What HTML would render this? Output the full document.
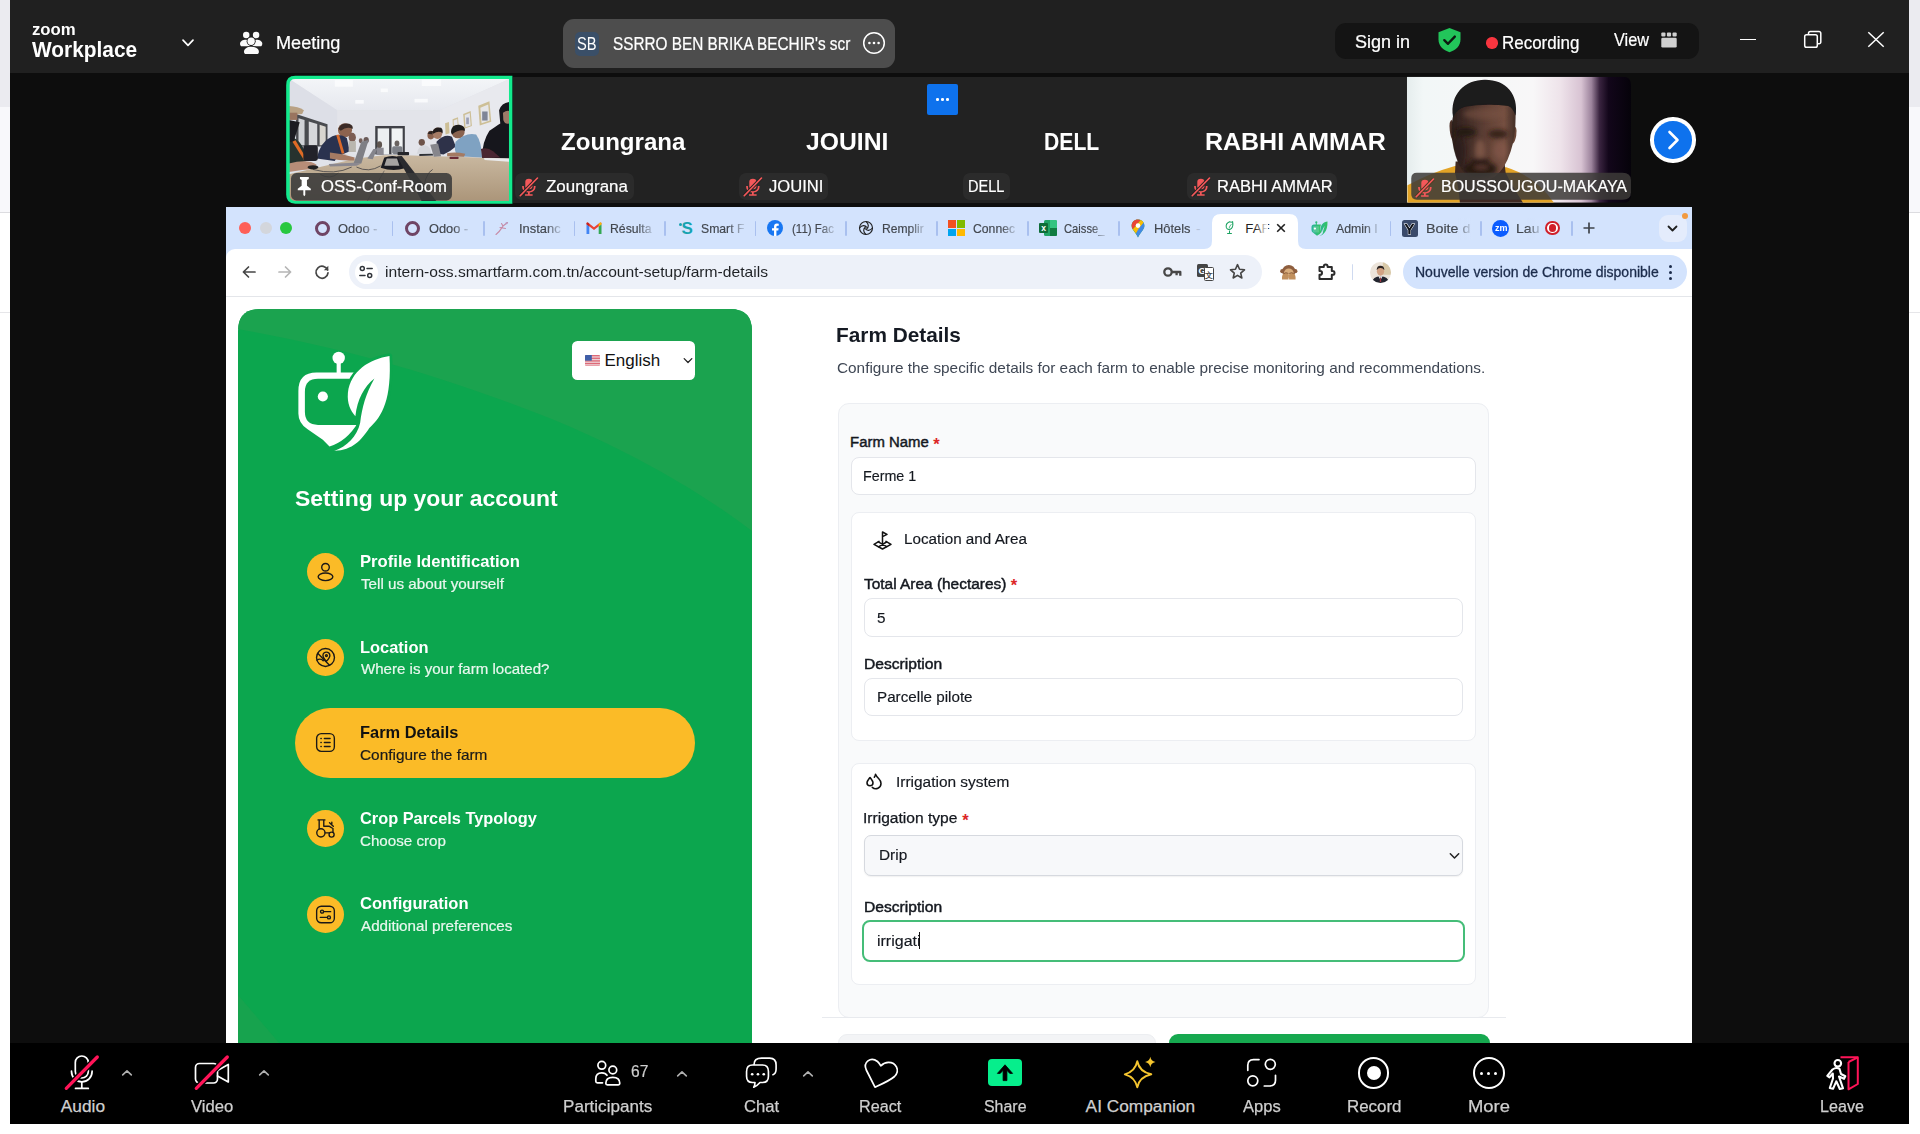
<!DOCTYPE html>
<html lang="en"><head><meta charset="utf-8"><title>Zoom Workplace - Meeting</title>
<style>
html,body{margin:0;padding:0;}
body{width:1920px;height:1134px;overflow:hidden;background:#fff;position:relative;font-family:"Liberation Sans",sans-serif;}
.b{position:absolute;box-sizing:border-box;display:block;}
.t{position:absolute;white-space:pre;line-height:1;display:block;transform-origin:0 0;}
</style></head>
<body>
<!-- top -->
<div class="b" style="left:0.00px;top:0.00px;width:1920.00px;height:107.00px;background:#ebebf0;"></div>
<div class="b" style="left:0.00px;top:107.00px;width:1920.00px;height:105.00px;background:#f8f8fb;"></div>
<div class="b" style="left:0.00px;top:212.00px;width:1920.00px;height:1.00px;background:#dcdce0;"></div>
<div class="b" style="left:0.00px;top:312.00px;width:1920.00px;height:1.00px;background:#e6e6e9;"></div>
<div class="b" style="left:10.00px;top:0.00px;width:1899.00px;height:1124.00px;background:#0d0d0d;"></div>
<div class="b" style="left:10.00px;top:0.00px;width:1899.00px;height:73.00px;background:#202020;"></div>
<span class="t" id="t1" style="left:31.83px;top:21.00px;font-size:17.00px;color:#fff;font-weight:700;transform:scaleX(0.9851);">zoom</span>
<span class="t" id="t2" style="left:32.30px;top:39.00px;font-size:22.50px;color:#fff;font-weight:700;transform:scaleX(0.9268);">Workplace</span>
<svg class="b" style="left:181.00px;top:38.20px;" width="14.00" height="10.00" viewBox="0 0 14 10"><path d="M2 2.2 L7 7.4 L12 2.2" fill="none" stroke="#fff" stroke-width="1.7" stroke-linecap="round" stroke-linejoin="round"/></svg>
<svg class="b" style="left:230.00px;top:22.00px;" width="50.00" height="40.00" viewBox="0 0 1418 1134"><g fill="#fafafa"><circle cx="460" cy="370" r="92"/><circle cx="740" cy="370" r="92"/><path d="M285 610 C285 545 360 500 450 500 C520 500 560 530 560 600 L560 690 L340 690 C300 690 285 660 285 610Z"/><path d="M915 610 C915 545 840 500 750 500 C680 500 640 530 640 600 L640 690 L860 690 C900 690 915 660 915 610Z"/><circle cx="600" cy="545" r="128" fill="#202020"/><circle cx="600" cy="545" r="104"/><path d="M372 850 C372 750 470 680 608 680 C746 680 844 750 844 850 C844 905 810 934 770 934 L446 934 C406 934 372 905 372 850Z" fill="#202020"/><path d="M396 845 C396 765 480 705 608 705 C736 705 820 765 820 845 C820 890 795 910 760 910 L456 910 C421 910 396 890 396 845Z"/></g></svg>
<span class="t" id="t3" style="left:276.17px;top:35.00px;font-size:17.50px;color:#fff;transform:scaleX(1.0337);-webkit-text-stroke:0.220px #fff;">Meeting</span>
<div class="b" style="left:563.00px;top:19.00px;width:332.00px;height:49.00px;background:#4d4d4d;border-radius:11px;"></div>
<div class="b" style="left:575.00px;top:32.00px;width:24.00px;height:23.50px;background:#3a4f68;border-radius:5px;"></div>
<span class="t" id="t4" style="left:576.80px;top:36.00px;font-size:17.50px;color:#fff;transform:scaleX(0.840);">SB</span>
<span class="t" id="t5" style="left:612.63px;top:36.00px;font-size:17.50px;color:#fff;transform:scaleX(0.8763);-webkit-text-stroke:0.220px #fff;">SSRRO BEN BRIKA BECHIR's scr</span>
<svg class="b" style="left:862.00px;top:31.00px;" width="24.00" height="24.00" viewBox="0 0 24 24"><circle cx="12" cy="12" r="10.3" fill="none" stroke="#fff" stroke-width="1.5"/><circle cx="7.4" cy="12" r="1.300" fill="#fff"/><circle cx="12" cy="12" r="1.300" fill="#fff"/><circle cx="16.600" cy="12" r="1.300" fill="#fff"/></svg>
<div class="b" style="left:1335.00px;top:23.00px;width:364.00px;height:36.00px;background:#141414;border-radius:11px;"></div>
<span class="t" id="t6" style="left:1354.56px;top:33.00px;font-size:18.20px;color:#fff;transform:scaleX(0.9903);-webkit-text-stroke:0.220px #fff;">Sign in</span>
<svg class="b" style="left:1437.00px;top:27.00px;" width="25.00" height="26.00" viewBox="0 0 25 26"><path d="M12.500 1 L23.500 5.200 V12.500 C23.500 18.700 19 23.200 12.500 25.200 C6 23.200 1.500 18.700 1.500 12.500 V5.200 Z" fill="#22c55a"/><path d="M7.300 13.200 L11 16.800 L17.800 9.600" fill="none" stroke="#0d1a10" stroke-width="2.400" stroke-linecap="round" stroke-linejoin="round"/></svg>
<div class="b" style="left:1486.30px;top:37.30px;width:11.40px;height:11.40px;background:#f8353f;border-radius:50%;"></div>
<span class="t" id="t7" style="left:1502.22px;top:34.00px;font-size:18.20px;color:#fff;transform:scaleX(0.9330);-webkit-text-stroke:0.220px #fff;">Recording</span>
<span class="t" id="t8" style="left:1614.37px;top:31.00px;font-size:18.20px;color:#fff;transform:scaleX(0.8978);-webkit-text-stroke:0.220px #fff;">View</span>
<svg class="b" style="left:1660.50px;top:31.50px;" width="16.00" height="16.00" viewBox="0 0 16 16"><g fill="#d0d0d0"><rect x="0.300" y="0.500" width="4.200" height="4" rx="1"/><rect x="5.900" y="0.500" width="4.200" height="4" rx="1"/><rect x="11.500" y="0.500" width="4.200" height="4" rx="1"/><rect x="0.300" y="5.700" width="15.400" height="9.800" rx="1.300"/></g></svg>
<div class="b" style="left:1740.00px;top:38.60px;width:16.00px;height:1.60px;background:#fff;"></div>
<svg class="b" style="left:1803.00px;top:30.00px;" width="20.00" height="19.00" viewBox="0 0 20 19"><path d="M5.500 4.500 V3.300 a1.800 1.800 0 0 1 1.800-1.800 H16 a1.800 1.800 0 0 1 1.800 1.800 V12 a1.800 1.800 0 0 1-1.800 1.800 H14.600" fill="none" stroke="#fff" stroke-width="1.500"/><rect x="1.700" y="4.700" width="12.600" height="12.600" rx="1.800" fill="none" stroke="#fff" stroke-width="1.500"/></svg>
<svg class="b" style="left:1867.00px;top:31.00px;" width="18.00" height="17.00" viewBox="0 0 18 17"><path d="M1.300 1.200 L16.700 15.800 M16.700 1.200 L1.300 15.800" stroke="#fff" stroke-width="1.500" fill="none"/></svg>
<!-- thumbs -->
<div class="b" style="left:513.00px;top:77.00px;width:894.00px;height:126.00px;background:#222222;"></div>
<svg class="b" style="left:284.00px;top:74.00px;" width="232.00" height="132.00" viewBox="0 0 1920 1092"><defs><clipPath id="cc"><path d="M93 42 H1862 V1050 H93 Q45 1050 45 1002 V90 Q45 42 93 42Z"/></clipPath><filter id="cb" x="-5%" y="-5%" width="110%" height="110%"><feGaussianBlur stdDeviation="5"/></filter><linearGradient id="ceil" x1="0" y1="0" x2="0" y2="1"><stop offset="0" stop-color="#f3f5f8"/><stop offset="1" stop-color="#e6e8ee"/></linearGradient><linearGradient id="tbl" x1="0" y1="0" x2="0" y2="1"><stop offset="0" stop-color="#c9b8a0"/><stop offset="1" stop-color="#ab9579"/></linearGradient></defs><path d="M93 15 H1890 V1073 H93 Q18 1073 18 998 V90 Q18 15 93 15Z" fill="#12ea8d"/><g clip-path="url(#cc)"><g filter="url(#cb)"><rect x="40" y="40" width="1830" height="1015" fill="#e1e3e9"/><polygon points="40,40 1870,40 1290,300 440,300" fill="url(#ceil)"/><polygon points="40,40 440,300 440,640 40,760" fill="#dddfe7"/><polygon points="1870,40 1290,300 1290,640 1870,720" fill="#e8e9ee"/><rect x="440" y="300" width="850" height="360" fill="#e3e4ea"/><rect x="420" y="50" width="150" height="55" fill="#fbfcfd" opacity="0.9"/><rect x="1140" y="45" width="160" height="55" fill="#fbfcfd" opacity="0.9"/><rect x="590" y="215" width="70" height="30" fill="#fbfcfd" opacity="0.9"/><rect x="1080" y="205" width="110" height="30" fill="#fbfcfd" opacity="0.9"/><rect x="800" y="120" width="60" height="30" fill="#fbfcfd" opacity="0.9"/><polygon points="100,330 360,415 360,600 100,600" fill="#4a4b50"/><polygon points="120,365 170,380 170,590 120,590" fill="#d0d2d6"/><polygon points="205,392 275,414 275,590 205,590" fill="#d6d7da"/><polygon points="295,420 345,436 345,590 295,590" fill="#d8d5cf"/><rect x="755" y="430" width="245" height="235" fill="#3f4146"/><rect x="775" y="450" width="95" height="215" fill="#eceff1"/><rect x="890" y="450" width="92" height="215" fill="#f1f3f4"/><polygon points="1608,262 1700,225 1715,395 1620,425" fill="#cdbf96"/><polygon points="1483,330 1545,305 1555,430 1492,452" fill="#cdbf96"/><polygon points="1395,375 1440,358 1447,455 1400,470" fill="#cdbf96"/><polygon points="1333,408 1365,397 1370,490 1337,500" fill="#cdbf96"/><polygon points="1625,280 1690,253 1702,385 1635,408" fill="#e6e6e8"/><polygon points="1496,340 1537,323 1545,425 1502,440" fill="#e3e4ea"/><polygon points="1404,385 1434,373 1439,448 1407,458" fill="#e4e4ea"/><rect x="1640" y="310" width="45" height="75" fill="#7f8597"/><rect x="1508" y="360" width="22" height="55" fill="#9b9fb5"/><polygon points="40,830 600,700 820,672 1000,672 1860,700 1870,1055 40,1055" fill="url(#tbl)"/><ellipse cx="505" cy="465" rx="58" ry="58" fill="#8d6450"/><path d="M450 455 Q470 400 540 412 Q575 425 568 455 Q520 430 470 470Z" fill="#3a2c27"/><path d="M270 700 Q300 560 400 515 Q470 490 520 530 L545 640 Q440 680 420 720 Z" fill="#2c3350"/><path d="M380 650 Q480 660 585 690 L580 715 Q470 720 380 700Z" fill="#a57a64"/><polygon points="432,505 455,500 500,655 478,660" fill="#d9692a"/><ellipse cx="565" cy="525" rx="30" ry="38" fill="#7b5d52"/><rect x="535" y="555" width="60" height="90" fill="#b9b6ae"/><ellipse cx="680" cy="548" rx="22" ry="26" fill="#6b5a58"/><ellipse cx="635" cy="552" rx="16" ry="20" fill="#75605a"/><polygon points="575,740 640,560 700,545 640,740" fill="#7f7f85"/><polygon points="370,745 575,735 640,740 600,760 380,765" fill="#8b8890"/><polygon points="690,700 740,620 770,620 735,705" fill="#85858c"/><path d="M40 520 Q130 520 190 680 L190 720 L40 760Z" fill="#26332f"/><polygon points="40,380 130,400 80,560 40,560" fill="#1e1e22"/><path d="M40 265 Q120 270 165 300 L150 330 L40 340Z" fill="#b9a284"/><rect x="40" y="320" width="70" height="60" fill="#9a7560"/><polygon points="70,560 95,548 185,700 165,712" fill="#df6a25"/><path d="M40 740 Q200 700 270 750 Q250 790 150 795 L40 810Z" fill="#b78d78"/><ellipse cx="240" cy="772" rx="45" ry="18" fill="#222"/><rect x="160" y="590" width="120" height="130" rx="20" fill="#23242a"/><ellipse cx="790" cy="585" rx="22" ry="28" fill="#5f5450"/><rect x="765" y="610" width="60" height="60" fill="#8c8b93"/><ellipse cx="935" cy="575" rx="20" ry="24" fill="#6b6460"/><rect x="895" y="598" width="85" height="65" rx="15" fill="#7d8087"/><ellipse cx="1140" cy="565" rx="26" ry="28" fill="#6d5248"/><path d="M1100 660 Q1110 590 1170 590 Q1215 600 1220 660Z" fill="#d5d7dc"/><ellipse cx="1215" cy="505" rx="28" ry="36" fill="#8a6250"/><path d="M1188 495 Q1200 462 1240 475 L1240 500Z" fill="#2a2322"/><ellipse cx="1270" cy="490" rx="40" ry="48" fill="#a67c66"/><path d="M1230 480 Q1240 432 1300 445 Q1318 460 1312 490 Q1280 465 1235 495Z" fill="#231d1d"/><path d="M1262 560 Q1330 490 1390 520 L1422 600 Q1380 640 1320 665 L1275 660Z" fill="#2d3048"/><polygon points="1210,585 1275,575 1300,680 1240,685" fill="#86868c"/><ellipse cx="1440" cy="480" rx="55" ry="52" fill="#8a6350"/><path d="M1382 480 Q1385 415 1450 420 Q1500 428 1498 470 Q1450 455 1390 500Z" fill="#1f1a1a"/><path d="M1420 560 Q1500 480 1590 500 Q1635 560 1640 690 L1440 680 Q1400 640 1420 560Z" fill="#7fa2c2"/><path d="M1350 655 Q1420 640 1500 660 L1490 685 L1350 680Z" fill="#a47a62"/><path d="M1780 300 Q1800 240 1862 232 L1862 700 L1640 690 Q1640 560 1700 470 Q1760 430 1790 410Z" fill="#17151a"/><path d="M1812 320 Q1840 300 1862 305 L1862 410 Q1830 420 1815 380Z" fill="#9c7a68"/><path d="M1630 620 Q1680 600 1730 640 L1790 690 L1640 695Z" fill="#4a2730"/><polygon points="1655,695 1862,700 1862,725 1660,712" fill="#e9eaec"/><polygon points="1120,662 1230,660 1235,675 1120,678" fill="#2f3036"/><rect x="1370" y="685" width="75" height="18" rx="6" fill="#6a2c34"/><path d="M830 690 Q900 665 960 690 L1000 780 Q900 810 800 775Z" fill="#1c1d22"/><path d="M850 700 L935 700 L955 760 L830 760Z" fill="#c9c6c2" opacity="0.800"/><polygon points="935,680 975,678 1260,1050 1140,1050" fill="#2a2a2e"/><rect x="940" y="645" width="95" height="28" rx="6" fill="#26272c"/><path d="M240 790 Q420 840 560 770 M300 830 Q380 880 450 820 M600 770 Q700 820 800 760 M1140 1050 Q1160 820 1230 790" fill="none" stroke="#33333a" stroke-width="6"/><path d="M690 1050 L830 800" fill="none" stroke="#4b4a4c" stroke-width="5"/></g></g><rect x="58" y="820" width="1332" height="226" rx="45" fill="#3a3a3a" opacity="0.880"/><path d="M132 852 H205 V868 L190 878 V925 L222 950 V962 H176 V1002 L168 1012 L160 1002 V962 H114 V950 L146 925 V878 L132 868Z" fill="#fff"/></svg>
<span class="t" id="t9" style="left:321.30px;top:179.00px;font-size:16.80px;color:#fff;transform:scaleX(0.9917);-webkit-text-stroke:0.200px #fff;">OSS-Conf-Room</span>
<span class="t" id="t10" style="left:560.79px;top:130.00px;font-size:24.00px;color:#fff;font-weight:700;transform:scaleX(1.0034);">Zoungrana</span>
<span class="t" id="t11" style="left:805.89px;top:130.00px;font-size:24.00px;color:#fff;font-weight:700;transform:scaleX(1.0290);">JOUINI</span>
<span class="t" id="t12" style="left:1044.03px;top:130.00px;font-size:24.00px;color:#fff;font-weight:700;transform:scaleX(0.8811);">DELL</span>
<span class="t" id="t13" style="left:1204.51px;top:130.00px;font-size:24.00px;color:#fff;font-weight:700;transform:scaleX(1.0409);">RABHI AMMAR</span>
<div class="b" style="left:515.00px;top:172.50px;width:119.00px;height:27.50px;background:#2b2b2b;border-radius:7px;"></div><svg class="b" style="left:518.00px;top:175.00px;" width="22.00" height="23.00" viewBox="0 0 22 23"><g transform="translate(0.6,2.3) scale(1.08,0.92)"><g fill="#f4585a"><rect x="6.200" y="1.500" width="6.600" height="11.500" rx="3.300"/><path d="M3.300 9.500h1.600v1a4.600 4.600 0 0 0 9.200 0v-1h1.600v1a6.200 6.200 0 0 1-5.400 6.150V18.500h2.700v1.500H6v-1.500h2.700v-1.850A6.200 6.200 0 0 1 3.300 10.500z"/></g><path d="M1.500 20 L17.500 0.800" stroke="#222" stroke-width="3.4"/><path d="M1.500 20 L17.500 0.800" stroke="#f4585a" stroke-width="1.500" stroke-linecap="round"/></g></svg><span class="t" id="t14" style="left:545.59px;top:179.00px;font-size:16.80px;color:#fff;transform:scaleX(1.0087);-webkit-text-stroke:0.200px #fff;">Zoungrana</span>
<div class="b" style="left:739.00px;top:172.50px;width:89.00px;height:27.50px;background:#2b2b2b;border-radius:7px;"></div><svg class="b" style="left:742.00px;top:175.00px;" width="22.00" height="23.00" viewBox="0 0 22 23"><g transform="translate(0.6,2.3) scale(1.08,0.92)"><g fill="#f4585a"><rect x="6.200" y="1.500" width="6.600" height="11.500" rx="3.300"/><path d="M3.300 9.500h1.600v1a4.600 4.600 0 0 0 9.200 0v-1h1.600v1a6.200 6.200 0 0 1-5.400 6.150V18.500h2.700v1.500H6v-1.500h2.700v-1.850A6.200 6.200 0 0 1 3.300 10.500z"/></g><path d="M1.500 20 L17.500 0.800" stroke="#222" stroke-width="3.4"/><path d="M1.500 20 L17.500 0.800" stroke="#f4585a" stroke-width="1.500" stroke-linecap="round"/></g></svg><span class="t" id="t15" style="left:769.23px;top:179.00px;font-size:16.80px;color:#fff;transform:scaleX(0.9879);-webkit-text-stroke:0.200px #fff;">JOUINI</span>
<div class="b" style="left:962.50px;top:172.50px;width:47.50px;height:27.50px;background:#2b2b2b;border-radius:7px;"></div><span class="t" id="t16" style="left:968.36px;top:179.00px;font-size:16.80px;color:#fff;transform:scaleX(0.8691);-webkit-text-stroke:0.200px #fff;">DELL</span>
<div class="b" style="left:1187.00px;top:172.50px;width:150.00px;height:27.50px;background:#2b2b2b;border-radius:7px;"></div><svg class="b" style="left:1190.00px;top:175.00px;" width="22.00" height="23.00" viewBox="0 0 22 23"><g transform="translate(0.6,2.3) scale(1.08,0.92)"><g fill="#f4585a"><rect x="6.200" y="1.500" width="6.600" height="11.500" rx="3.300"/><path d="M3.300 9.500h1.600v1a4.600 4.600 0 0 0 9.200 0v-1h1.600v1a6.200 6.200 0 0 1-5.400 6.150V18.500h2.700v1.500H6v-1.500h2.700v-1.850A6.200 6.200 0 0 1 3.300 10.500z"/></g><path d="M1.500 20 L17.500 0.800" stroke="#222" stroke-width="3.4"/><path d="M1.500 20 L17.500 0.800" stroke="#f4585a" stroke-width="1.500" stroke-linecap="round"/></g></svg><span class="t" id="t17" style="left:1216.78px;top:179.00px;font-size:16.80px;color:#fff;transform:scaleX(0.9850);-webkit-text-stroke:0.200px #fff;">RABHI AMMAR</span>
<div class="b" style="left:927.00px;top:84.00px;width:31.00px;height:31.00px;background:#0e72ed;border-radius:2px;"></div>
<div class="b" style="left:936.05px;top:98.00px;width:2.50px;height:2.50px;background:#fff;border-radius:50%;"></div>
<div class="b" style="left:941.25px;top:98.00px;width:2.50px;height:2.50px;background:#fff;border-radius:50%;"></div>
<div class="b" style="left:946.45px;top:98.00px;width:2.50px;height:2.50px;background:#fff;border-radius:50%;"></div>
<svg class="b" style="left:1400.00px;top:74.00px;" width="240.00" height="132.00" viewBox="0 0 1920 1056"><defs><clipPath id="pc"><path d="M55 22 H1785 Q1848 22 1848 85 V967 Q1848 1030 1785 1030 H55Z"/></clipPath><linearGradient id="pbg" x1="0" y1="0" x2="1" y2="0"><stop offset="0" stop-color="#e4ecec"/><stop offset="0.080" stop-color="#f2f7f7"/><stop offset="0.560" stop-color="#f8f7f8"/><stop offset="0.680" stop-color="#eee3ea"/><stop offset="0.770" stop-color="#d8c3d3"/><stop offset="0.815" stop-color="#9c839c"/><stop offset="0.850" stop-color="#3a2440"/><stop offset="0.890" stop-color="#12061a"/><stop offset="1" stop-color="#040208"/></linearGradient><linearGradient id="skin" x1="0" y1="0" x2="1" y2="0"><stop offset="0" stop-color="#2c1f1b"/><stop offset="0.300" stop-color="#47302a"/><stop offset="0.600" stop-color="#654438"/><stop offset="0.820" stop-color="#755041"/><stop offset="1" stop-color="#432e27"/></linearGradient><filter id="bl" x="-10%" y="-10%" width="120%" height="120%"><feGaussianBlur stdDeviation="6"/></filter><filter id="bl2" x="-30%" y="-30%" width="160%" height="160%"><feGaussianBlur stdDeviation="16"/></filter><clipPath id="fc"><path d="M425 330 Q430 230 500 200 L860 200 Q925 240 925 340 Q925 500 885 620 Q840 760 760 820 Q690 865 620 855 Q520 830 470 720 Q420 600 412 470 Q410 390 425 330Z"/></clipPath></defs><g clip-path="url(#pc)"><rect x="40" y="10" width="1830" height="1040" fill="url(#pbg)"/><g filter="url(#bl)"><path d="M60 1040 L60 890 Q240 790 440 735 L850 745 Q1090 820 1240 1040Z" fill="#e2a327"/><path d="M445 700 L835 700 L845 790 Q900 900 990 1040 L480 1040 Q470 900 440 790Z" fill="#3f2a22"/><path d="M415 365 Q390 370 398 450 Q405 520 430 540Z" fill="#4a3028"/><path d="M912 420 Q940 420 930 490 Q922 545 900 560Z" fill="#6a4638"/><path d="M425 330 Q430 230 500 200 L860 200 Q925 240 925 340 Q925 500 885 620 Q840 760 760 820 Q690 865 620 855 Q520 830 470 720 Q420 600 412 470 Q410 390 425 330Z" fill="url(#skin)"/><path d="M425 345 C395 160 520 45 680 45 C850 45 950 160 925 335 Q905 270 865 255 Q680 235 520 262 Q455 280 425 345Z" fill="#1d1a1b"/></g><g clip-path="url(#fc)"><g filter="url(#bl2)"><ellipse cx="525" cy="465" rx="85" ry="38" fill="#21140f" opacity="0.850"/><ellipse cx="785" cy="480" rx="80" ry="36" fill="#2a1914" opacity="0.800"/><ellipse cx="640" cy="610" rx="42" ry="85" fill="#8d6150" opacity="0.650"/><ellipse cx="800" cy="610" rx="60" ry="70" fill="#94655394" opacity="0.600"/><ellipse cx="470" cy="620" rx="50" ry="130" fill="#2a1b17" opacity="0.700"/><ellipse cx="640" cy="760" rx="135" ry="62" fill="#241612" opacity="0.900"/><ellipse cx="640" cy="690" rx="80" ry="20" fill="#2a1a15" opacity="0.800"/><ellipse cx="650" cy="745" rx="60" ry="16" fill="#6b4438" opacity="0.800"/><ellipse cx="675" cy="320" rx="170" ry="45" fill="#7a5444" opacity="0.550"/></g></g></g><path d="M135 790 H1780 Q1848 790 1848 850 V945 Q1848 1005 1780 1005 H135 Q90 1005 90 960 V835 Q90 790 135 790Z" fill="#3c3a38" opacity="0.860"/></svg>
<svg class="b" style="left:1414.00px;top:175.50px;" width="22.00" height="23.00" viewBox="0 0 22 23"><g transform="translate(0.6,2.3) scale(1.08,0.92)"><g fill="#f4585a"><rect x="6.200" y="1.500" width="6.600" height="11.500" rx="3.300"/><path d="M3.300 9.500h1.600v1a4.600 4.600 0 0 0 9.200 0v-1h1.600v1a6.200 6.200 0 0 1-5.400 6.150V18.500h2.700v1.500H6v-1.500h2.700v-1.850A6.200 6.200 0 0 1 3.300 10.500z"/></g><path d="M1.500 20 L17.500 0.800" stroke="#4a3a22" stroke-width="3.4"/><path d="M1.500 20 L17.500 0.800" stroke="#f4585a" stroke-width="1.500" stroke-linecap="round"/></g></svg>
<span class="t" id="t18" style="left:1440.93px;top:179.00px;font-size:16.80px;color:#fff;transform:scaleX(0.9531);-webkit-text-stroke:0.200px #fff;">BOUSSOUGOU-MAKAYA</span>
<div class="b" style="left:1650.30px;top:117.30px;width:45.40px;height:45.40px;background:#fff;border-radius:50%;"></div>
<div class="b" style="left:1654.20px;top:121.20px;width:37.60px;height:37.60px;background:#0e72ed;border-radius:50%;"></div>
<svg class="b" style="left:1663.00px;top:128.00px;" width="20.00" height="24.00" viewBox="0 0 20 24"><path d="M6.500 4 L14.500 12 L6.500 20" fill="none" stroke="#fff" stroke-width="2.600" stroke-linecap="round" stroke-linejoin="round"/></svg>
<!-- chrome -->
<div class="b" style="left:226.00px;top:207.00px;width:1466.00px;height:836.00px;background:#fff;"></div>
<div class="b" style="left:226.00px;top:207.00px;width:1466.00px;height:55.00px;background:#d3e3fd;"></div>
<div class="b" style="left:226.00px;top:249.00px;width:1466.00px;height:47.00px;background:#fff;border-radius:9px 0 0 0;"></div>
<div class="b" style="left:226.00px;top:296.00px;width:1466.00px;height:1.00px;background:#e4e6ea;"></div>
<div class="b" style="left:239.10px;top:221.80px;width:12.40px;height:12.40px;background:#fe5f57;border-radius:50%;"></div>
<div class="b" style="left:259.60px;top:221.80px;width:12.40px;height:12.40px;background:#d3d6dc;border-radius:50%;"></div>
<div class="b" style="left:280.10px;top:221.80px;width:12.40px;height:12.40px;background:#28c840;border-radius:50%;"></div>
<div class="b" style="left:391.70px;top:220.50px;width:1.60px;height:15.50px;background:#a9c0ef;border-radius:1px;"></div>
<div class="b" style="left:483.20px;top:220.50px;width:1.60px;height:15.50px;background:#a9c0ef;border-radius:1px;"></div>
<div class="b" style="left:573.70px;top:220.50px;width:1.60px;height:15.50px;background:#a9c0ef;border-radius:1px;"></div>
<div class="b" style="left:664.20px;top:220.50px;width:1.60px;height:15.50px;background:#a9c0ef;border-radius:1px;"></div>
<div class="b" style="left:754.70px;top:220.50px;width:1.60px;height:15.50px;background:#a9c0ef;border-radius:1px;"></div>
<div class="b" style="left:845.20px;top:220.50px;width:1.60px;height:15.50px;background:#a9c0ef;border-radius:1px;"></div>
<div class="b" style="left:936.20px;top:220.50px;width:1.60px;height:15.50px;background:#a9c0ef;border-radius:1px;"></div>
<div class="b" style="left:1027.20px;top:220.50px;width:1.60px;height:15.50px;background:#a9c0ef;border-radius:1px;"></div>
<div class="b" style="left:1118.20px;top:220.50px;width:1.60px;height:15.50px;background:#a9c0ef;border-radius:1px;"></div>
<div class="b" style="left:1389.80px;top:220.50px;width:1.60px;height:15.50px;background:#a9c0ef;border-radius:1px;"></div>
<div class="b" style="left:1480.20px;top:220.50px;width:1.60px;height:15.50px;background:#a9c0ef;border-radius:1px;"></div>
<div class="b" style="left:1571.20px;top:220.50px;width:1.60px;height:15.50px;background:#a9c0ef;border-radius:1px;"></div>
<div class="b" style="left:314.50px;top:220.50px;width:15.00px;height:15.00px;border:3.2px solid #6f4565;border-radius:50%;"></div>
<span class="t" id="t19" style="left:338.26px;top:222.00px;font-size:13.30px;color:#42474e;transform:scaleX(0.9703);-webkit-text-stroke:0.180px #42474e;">Odoo -</span>
<div class="b" style="left:362.00px;top:218.00px;width:19.00px;height:22.00px;background:linear-gradient(90deg,rgba(211,227,253,0),#d3e3fd);"></div>
<div class="b" style="left:405.00px;top:220.50px;width:15.00px;height:15.00px;border:3.2px solid #6f4565;border-radius:50%;"></div>
<span class="t" id="t20" style="left:428.88px;top:222.00px;font-size:13.30px;color:#42474e;transform:scaleX(0.9646);-webkit-text-stroke:0.180px #42474e;">Odoo -</span>
<div class="b" style="left:453.00px;top:218.00px;width:19.00px;height:22.00px;background:linear-gradient(90deg,rgba(211,227,253,0),#d3e3fd);"></div>
<svg class="b" style="left:494.00px;top:220.00px;" width="16.00" height="16.00" viewBox="0 0 16 16"><path d="M2 14.500 C5.500 12 7 9 9 6 M9 6 L13.500 2.500 M6 7.500 L11.500 8.500 M9 6 L7.500 3.500" stroke="#c47d98" stroke-width="1.150" fill="none" stroke-linecap="round" opacity="0.850"/><circle cx="12.600" cy="3.200" r="1.100" fill="#b59ac4" opacity="0.850"/></svg>
<span class="t" id="t21" style="left:518.84px;top:222.00px;font-size:13.30px;color:#42474e;transform:scaleX(0.9727);-webkit-text-stroke:0.180px #42474e;">Instanc</span>
<div class="b" style="left:546.00px;top:218.00px;width:18.00px;height:22.00px;background:linear-gradient(90deg,rgba(211,227,253,0),#d3e3fd);"></div>
<svg class="b" style="left:585.50px;top:221.50px;" width="16.00" height="13.00" viewBox="0 0 16 13"><path d="M0.500 12 V2.200 L3.300 4.400 V12Z" fill="#4285f4"/><path d="M15.500 12 V2.200 L12.700 4.400 V12Z" fill="#34a853"/><path d="M0.500 2.200 V1.500 Q0.500 0.300 1.900 0.600 L8 5.300 L14.100 0.600 Q15.500 0.300 15.500 1.500 V2.200 L8 8 Z" fill="#ea4335"/><path d="M12.700 4.400 L15.500 2.200 V1.500 Q15.500 0.300 14.100 0.600 L12.700 1.700Z" fill="#fbbc04"/><path d="M0.500 2.200 L3.300 4.400 V1.700 L1.900 0.600 Q0.500 0.300 0.500 1.500Z" fill="#c5221f"/></svg>
<span class="t" id="t22" style="left:609.98px;top:222.00px;font-size:13.30px;color:#42474e;transform:scaleX(0.9204);-webkit-text-stroke:0.180px #42474e;">Résulta</span>
<div class="b" style="left:638.00px;top:218.00px;width:18.00px;height:22.00px;background:linear-gradient(90deg,rgba(211,227,253,0),#d3e3fd);"></div>
<span class="t" id="t23" style="left:681.50px;top:220.00px;font-size:17.00px;color:#17a3b0;font-weight:700;">S</span>
<div class="b" style="left:678.80px;top:222.50px;width:3.00px;height:3.00px;background:#17a3b0;border-radius:50%;"></div>
<span class="t" id="t24" style="left:700.77px;top:222.00px;font-size:13.30px;color:#42474e;transform:scaleX(0.9175);-webkit-text-stroke:0.180px #42474e;">Smart F</span>
<div class="b" style="left:728.00px;top:218.00px;width:20.00px;height:22.00px;background:linear-gradient(90deg,rgba(211,227,253,0),#d3e3fd);"></div>
<div class="b" style="left:766.70px;top:219.70px;width:16.60px;height:16.60px;background:#1877f2;border-radius:50%;"></div>
<svg class="b" style="left:766.70px;top:219.70px;" width="16.60" height="16.60" viewBox="0 0 16.600 16.600"><path d="M9.400 16.600 V10.600 H11.300 L11.650 8.300 H9.400 V6.900 Q9.400 5.750 10.600 5.750 H11.750 V3.750 Q10.800 3.600 9.900 3.600 Q7.050 3.600 7.050 6.550 V8.300 H5 V10.600 H7.050 V16.600Z" fill="#fff"/></svg>
<span class="t" id="t25" style="left:792.22px;top:222.00px;font-size:13.30px;color:#42474e;transform:scaleX(0.8661);-webkit-text-stroke:0.180px #42474e;">(11) Fac</span>
<div class="b" style="left:820.00px;top:218.00px;width:18.00px;height:22.00px;background:linear-gradient(90deg,rgba(211,227,253,0),#d3e3fd);"></div>
<svg class="b" style="left:858.00px;top:220.00px;" width="16.00" height="16.00" viewBox="0 0 16 16"><g fill="none" stroke="#202123" stroke-width="1.150"><circle cx="8" cy="8" r="6.500"/><path d="M8 1.500 C11 4 11 7 8.500 9 M14.500 8 C12 11 9 11 7 8.500 M8 14.500 C5 12 5 9 7.500 7 M1.500 8 C4 5 7 5 9 7.500"/></g></svg>
<span class="t" id="t26" style="left:881.99px;top:222.00px;font-size:13.30px;color:#42474e;transform:scaleX(0.9099);-webkit-text-stroke:0.180px #42474e;">Remplir</span>
<div class="b" style="left:910.00px;top:218.00px;width:18.00px;height:22.00px;background:linear-gradient(90deg,rgba(211,227,253,0),#d3e3fd);"></div>
<div class="b" style="left:948.20px;top:219.80px;width:7.80px;height:7.80px;background:#f25022;"></div>
<div class="b" style="left:957.00px;top:219.80px;width:7.80px;height:7.80px;background:#7fba00;"></div>
<div class="b" style="left:948.20px;top:228.60px;width:7.80px;height:7.80px;background:#00a4ef;"></div>
<div class="b" style="left:957.00px;top:228.60px;width:7.80px;height:7.80px;background:#ffb900;"></div>
<span class="t" id="t27" style="left:973.19px;top:222.00px;font-size:13.30px;color:#42474e;transform:scaleX(0.9176);-webkit-text-stroke:0.180px #42474e;">Connec</span>
<div class="b" style="left:1001.00px;top:218.00px;width:18.00px;height:22.00px;background:linear-gradient(90deg,rgba(211,227,253,0),#d3e3fd);"></div>
<div class="b" style="left:1043.50px;top:220.00px;width:13.00px;height:16.00px;background:#21a366;border-radius:1.500px;"></div>
<div class="b" style="left:1050.00px;top:220.00px;width:6.50px;height:8.00px;background:#33c481;border-radius:0 1.500px 0 0;"></div>
<div class="b" style="left:1050.00px;top:228.00px;width:6.50px;height:8.00px;background:#107c41;border-radius:0 0 1.500px 0;"></div>
<div class="b" style="left:1038.80px;top:223.30px;width:9.50px;height:9.50px;background:#0e6d38;border-radius:1px;"></div>
<span class="t" id="t28" style="left:1041.20px;top:224.00px;font-size:8.50px;color:#fff;font-weight:700;">x</span>
<span class="t" id="t29" style="left:1063.88px;top:222.00px;font-size:13.30px;color:#42474e;transform:scaleX(0.8440);-webkit-text-stroke:0.180px #42474e;">Caisse_</span>
<div class="b" style="left:1091.00px;top:218.00px;width:18.00px;height:22.00px;background:linear-gradient(90deg,rgba(211,227,253,0),#d3e3fd);"></div>
<svg class="b" style="left:1131.00px;top:219.00px;" width="14.00" height="19.00" viewBox="0 0 14 19"><path d="M7 0.500 C3.300 0.500 0.600 3.200 0.600 6.700 C0.600 10.700 5 13.500 7 18.500 C9 13.500 13.400 10.700 13.400 6.700 C13.400 3.200 10.700 0.500 7 0.500Z" fill="#34a853"/><path d="M7 0.500 C3.300 0.500 0.600 3.200 0.600 6.700 C0.600 8 1.100 9.200 1.800 10.300 L9.700 1.100 C8.900 0.700 8 0.500 7 0.500Z" fill="#ea4335"/><path d="M9.700 1.100 L4.300 7.400 L1.800 10.300 C2.700 11.700 3.900 13 5 14.500 L12.600 3.700 C11.900 2.500 10.900 1.600 9.700 1.100Z" fill="#fbbc04"/><path d="M12.600 3.700 L7.300 10 L5 14.500 C5.800 15.700 6.500 17 7 18.500 C9 13.500 13.400 10.700 13.400 6.700 C13.400 5.600 13.100 4.600 12.600 3.700Z" fill="#4285f4" opacity="0.900"/><circle cx="7" cy="6.600" r="2.300" fill="#fff"/></svg>
<span class="t" id="t30" style="left:1154.12px;top:222.00px;font-size:13.30px;color:#42474e;transform:scaleX(0.9696);-webkit-text-stroke:0.180px #42474e;">Hôtels</span>
<span class="t" id="t31" style="left:1196.00px;top:222.00px;font-size:13.30px;color:#b5c2da;">-</span>
<svg class="b" style="left:1204.00px;top:214.00px;" width="102.00" height="35.00" viewBox="0 0 102 35"><path d="M0 35 Q8 35 8 27 V9 Q8 0 17 0 H85 Q94 0 94 9 V27 Q94 35 102 35Z" fill="#fff"/></svg>
<svg class="b" style="left:1223.50px;top:221.00px;" width="11.00" height="13.40" viewBox="0 0 14 17"><path d="M7 1 C3.500 2.500 2.200 5.500 3 8.500 C4 11.500 7.500 11.500 9.500 9.500 C11.500 7 11.500 3.500 11 1 C9.500 1.800 8.200 1.500 7 1Z" fill="none" stroke="#1aa260" stroke-width="1.300"/><path d="M7 12 V15.500 M4 15.800 H10" stroke="#1aa260" stroke-width="1.300" fill="none"/><path d="M6.500 9.500 C7 7 8 5.500 9.500 4" stroke="#1aa260" stroke-width="1" fill="none"/></svg>
<span class="t" id="t32" style="left:1245.30px;top:222.00px;font-size:13.30px;color:#1f1f1f;">FAF</span>
<div class="b" style="left:1255.00px;top:219.00px;width:13.00px;height:20.00px;background:linear-gradient(90deg,rgba(255,255,255,0),#fff);"></div>
<svg class="b" style="left:1275.50px;top:223.00px;" width="10.00" height="10.00" viewBox="0 0 10 10"><path d="M1.200 1.200 L8.800 8.800 M8.800 1.200 L1.200 8.800" stroke="#1f1f1f" stroke-width="1.600" fill="none"/></svg>
<svg class="b" style="left:1311.00px;top:220.50px;" width="17.00" height="15.00" viewBox="0 0 17 15"><defs><linearGradient id="adg" x1="0" y1="0" x2="1" y2="0"><stop offset="0" stop-color="#27b39a"/><stop offset="1" stop-color="#35c45f"/></linearGradient></defs><g fill="url(#adg)"><circle cx="5.300" cy="1.300" r="1.100"/><rect x="4.800" y="1.500" width="1" height="2.500"/><path d="M3 3.600 H10 Q8.500 8 10.500 11 Q8.500 14 6 14.700 L1.800 11.600 Q0.500 10.600 0.500 9 V6.100 Q0.500 3.600 3 3.600Z"/><path d="M16.500 0.500 C12.500 1 9.300 4 9.800 8.500 C10 10 10.800 11 11 11.300 C11.300 8.800 12.300 6.500 14 5 C12.600 7.500 12.200 10 11.800 12 C11.300 13.300 10 14.300 8.300 14.800 C12 14.700 16.800 10.500 16.500 0.500Z"/></g><circle cx="3.900" cy="7.600" r="1.150" fill="#fff"/><path d="M2.300 5.200 H8.200 V11.400 H2.800 Q1.800 11.400 1.800 10.400 V5.700Z" fill="#fff" opacity="0.180"/></svg>
<span class="t" id="t33" style="left:1336.31px;top:222.00px;font-size:13.30px;color:#42474e;transform:scaleX(0.9271);-webkit-text-stroke:0.180px #42474e;">Admin I</span>
<div class="b" style="left:1364.00px;top:218.00px;width:18.00px;height:22.00px;background:linear-gradient(90deg,rgba(211,227,253,0),#d3e3fd);"></div>
<div class="b" style="left:1401.50px;top:219.50px;width:16.50px;height:17.00px;background:#3a4a6b;border-radius:2.500px;"></div>
<span class="t" id="t34" style="left:1404.30px;top:221.00px;font-size:15.50px;color:#10131a;font-weight:700;-webkit-text-stroke:0.900px #fff;paint-order:stroke fill;">Y</span>
<span class="t" id="t35" style="left:1425.54px;top:222.00px;font-size:13.30px;color:#42474e;transform:scaleX(1.0730);-webkit-text-stroke:0.180px #42474e;">Boite d</span>
<div class="b" style="left:1455.00px;top:218.00px;width:18.00px;height:22.00px;background:linear-gradient(90deg,rgba(211,227,253,0),#d3e3fd);"></div>
<div class="b" style="left:1492.10px;top:219.50px;width:17.00px;height:17.00px;background:#0b5cff;border-radius:50%;"></div>
<span class="t" id="t36" style="left:1495.00px;top:224.00px;font-size:9.00px;color:#fff;font-weight:700;">zm</span>
<span class="t" id="t37" style="left:1516.38px;top:222.00px;font-size:13.30px;color:#42474e;transform:scaleX(1.0581);-webkit-text-stroke:0.180px #42474e;">Lau</span>
<div class="b" style="left:1527.00px;top:218.00px;width:16.00px;height:22.00px;background:linear-gradient(90deg,rgba(211,227,253,0),#d3e3fd);"></div>
<div class="b" style="left:1545.30px;top:220.80px;width:14.40px;height:14.40px;background:#fff;border:2px solid #d0202a;border-radius:50%;"></div>
<div class="b" style="left:1548.80px;top:224.30px;width:7.40px;height:7.40px;background:#d0202a;border-radius:50%;"></div>
<svg class="b" style="left:1583.00px;top:221.50px;" width="12.00" height="12.00" viewBox="0 0 12 12"><path d="M6 0.500 V11.500 M0.500 6 H11.500" stroke="#3f444b" stroke-width="1.700"/></svg>
<div class="b" style="left:1659.00px;top:215.00px;width:28.00px;height:26.50px;background:#e4ecfc;border-radius:9px;"></div>
<svg class="b" style="left:1667.00px;top:224.50px;" width="11.00" height="8.00" viewBox="0 0 11 8"><path d="M1.500 1.500 L5.500 5.500 L9.500 1.500" fill="none" stroke="#1f1f1f" stroke-width="1.800" stroke-linecap="round" stroke-linejoin="round"/></svg>
<div class="b" style="left:1682.00px;top:212.50px;width:6.00px;height:6.00px;background:#f29a3f;border-radius:50%;"></div>
<svg class="b" style="left:240.00px;top:263.00px;" width="18.00" height="18.00" viewBox="0 0 18 18"><path d="M15 9 H3.600 M8.500 4 L3.400 9 L8.500 14" fill="none" stroke="#454545" stroke-width="1.700" stroke-linecap="round" stroke-linejoin="round"/></svg>
<svg class="b" style="left:276.00px;top:263.00px;" width="18.00" height="18.00" viewBox="0 0 18 18"><path d="M3 9 H14.400 M9.500 4 L14.600 9 L9.500 14" fill="none" stroke="#b5b5b5" stroke-width="1.700" stroke-linecap="round" stroke-linejoin="round"/></svg>
<svg class="b" style="left:313.00px;top:263.00px;" width="18.00" height="18.00" viewBox="0 0 18 18"><path d="M14.600 7 A6 6 0 1 0 15 9.800" fill="none" stroke="#454545" stroke-width="1.700" stroke-linecap="round"/><path d="M15.300 2.800 V7.300 H10.800Z" fill="#454545"/></svg>
<div class="b" style="left:349.00px;top:255.00px;width:913.00px;height:34.00px;background:#edf1f9;border-radius:17px;"></div>
<div class="b" style="left:354.50px;top:260.50px;width:23.00px;height:23.00px;background:#fff;border-radius:50%;"></div>
<svg class="b" style="left:358.00px;top:264.00px;" width="16.00" height="16.00" viewBox="0 0 16 16"><g fill="none" stroke="#30343a" stroke-width="1.500" stroke-linecap="round"><circle cx="4.300" cy="4.600" r="2"/><path d="M9 4.600 H14.200"/><circle cx="11.700" cy="11.400" r="2"/><path d="M1.800 11.400 H7"/></g></svg>
<span class="t" id="t38" style="left:385.40px;top:265.00px;font-size:14.60px;color:#1f2226;transform:scaleX(1.0707);">intern-oss.smartfarm.com.tn/account-setup/farm-details</span>
<svg class="b" style="left:1163.00px;top:265.50px;" width="19.00" height="12.00" viewBox="0 0 19 12"><circle cx="5" cy="6" r="3.700" fill="none" stroke="#474747" stroke-width="2.300"/><path d="M8.800 6 H17.300 V9.800 M13.600 6.500 V9.200" fill="none" stroke="#474747" stroke-width="2.300" stroke-linejoin="round"/></svg>
<div class="b" style="left:1196.90px;top:263.80px;width:11.60px;height:13.20px;background:#454545;border-radius:1.500px;"></div>
<span class="t" id="t39" style="left:1198.60px;top:266.00px;font-size:9.50px;color:#fff;font-weight:700;">G</span>
<div class="b" style="left:1203.80px;top:266.70px;width:10.00px;height:14.10px;background:#fff;border:1.300px solid #454545;border-radius:1.500px;"></div>
<span class="t" id="t40" style="left:1205.20px;top:272.00px;font-size:7.50px;color:#454545;font-weight:700;font-family:"Liberation Sans","Noto Sans CJK SC",sans-serif;">文</span>
<svg class="b" style="left:1229.20px;top:263.00px;" width="17.00" height="17.00" viewBox="0 0 20 20"><path d="M10 2 L12.400 7.400 L18.200 8 L13.800 11.900 L15.100 17.600 L10 14.600 L4.900 17.600 L6.200 11.900 L1.800 8 L7.600 7.400Z" fill="none" stroke="#454545" stroke-width="1.900" stroke-linejoin="round"/></svg>
<svg class="b" style="left:1280.30px;top:264.00px;" width="17.60" height="16.00" viewBox="0 0 22 20"><ellipse cx="11" cy="9" rx="8.200" ry="7.800" fill="#8e5e3e"/><circle cx="2.800" cy="9" r="2.600" fill="#8e5e3e"/><circle cx="19.200" cy="9" r="2.600" fill="#8e5e3e"/><ellipse cx="11" cy="11" rx="6" ry="5.500" fill="#d9ad7c"/><path d="M2.500 19.500 Q2 12 6.500 11 Q9.800 10.800 10.700 14 L10.700 19.500Z" fill="#c1905e"/><path d="M19.500 19.500 Q20 12 15.500 11 Q12.200 10.800 11.300 14 L11.300 19.500Z" fill="#c1905e"/><path d="M5 12 Q7 9.800 10.500 11.800 M17 12 Q15 9.800 11.500 11.800" stroke="#7a4e30" stroke-width="1" fill="none"/></svg>
<svg class="b" style="left:1316.50px;top:262.00px;" width="19.00" height="19.00" viewBox="0 0 19 19"><path d="M2.500 5 H6.800 V4.300 A1.900 1.900 0 0 1 10.600 4.300 V5 H14.800 V9 H15.600 A1.900 1.900 0 0 1 15.600 12.800 H14.800 V17 H2.500 V12.700 H3.200 A1.800 1.800 0 0 0 3.200 9.100 H2.500Z" fill="none" stroke="#2c2c2c" stroke-width="2" stroke-linejoin="round"/></svg>
<div class="b" style="left:1351.80px;top:264.00px;width:1.40px;height:16.00px;background:#cfdaf0;border-radius:1px;"></div>
<svg class="b" style="left:1369.50px;top:261.50px;" width="21.00" height="21.00" viewBox="0 0 23 23"><defs><clipPath id="av"><circle cx="11.500" cy="11.500" r="11.500"/></clipPath></defs><g clip-path="url(#av)"><rect width="23" height="23" fill="#ece4da"/><rect x="14" width="9" height="14" fill="#d9c9a8"/><path d="M2 23 Q3 15.500 11.500 15.500 Q20 15.500 21 23Z" fill="#22252f"/><path d="M9.300 15.500 L11.500 20 L13.700 15.500Z" fill="#f5f5f5"/><path d="M11 17 L12 17 L12.300 22 L10.700 22Z" fill="#9a3540"/><ellipse cx="11.500" cy="10" rx="4" ry="5" fill="#d2a283"/><path d="M7.300 9 Q7.500 4 11.500 4.200 Q15.700 4.200 15.700 9 Q14 6.500 11.500 6.700 Q9 6.500 7.300 9Z" fill="#2b2320"/></g></svg>
<div class="b" style="left:1402.50px;top:254.80px;width:284.50px;height:34.20px;background:#d3e3fd;border-radius:17px;"></div>
<span class="t" id="t41" style="left:1415.01px;top:266.00px;font-size:13.80px;color:#1b2b4b;transform:scaleX(1.0154);-webkit-text-stroke:0.300px #1b2b4b;">Nouvelle version de Chrome disponible</span>
<div class="b" style="left:1669.00px;top:264.70px;width:3.00px;height:3.00px;background:#1b2b4b;border-radius:50%;"></div>
<div class="b" style="left:1669.00px;top:270.70px;width:3.00px;height:3.00px;background:#1b2b4b;border-radius:50%;"></div>
<div class="b" style="left:1669.00px;top:276.70px;width:3.00px;height:3.00px;background:#1b2b4b;border-radius:50%;"></div>
<!-- page -->
<svg class="b" style="left:238.00px;top:308.70px;" width="514.00" height="735.00" viewBox="0 0 514 735"><defs><clipPath id="gp"><path d="M22 0 H492 Q514 0 514 22 V735 H0 V22 Q0 0 22 0Z"/></clipPath></defs><g clip-path="url(#gp)"><rect width="514" height="735" fill="#0ca64e"/><path d="M0 20 C100 38 200 64 321 113 C400 146 470 188 514 222 V0 H0Z" fill="#1ba34f"/><path d="M0 686 L42 735 H0Z" fill="#17a34e"/></g></svg>
<svg class="b" style="left:226.00px;top:296.00px;" width="300.00" height="180.00" viewBox="0 0 1890 1134"><g fill="#fff"><circle cx="710" cy="390" r="39"/><rect x="697" y="415" width="26" height="80"/><path d="M570 482 H830 V800 Q760 915 652 948 Q630 925 610 905 L512 838 Q456 800 456 740 V598 Q456 482 570 482Z"/></g><path d="M580 522 H860 V812 H580 Q497 812 497 730 V604 Q497 522 580 522Z" fill="#0ca64e"/><circle cx="610" cy="633" r="32" fill="#fff"/><path d="M1030 378 C905 398 785 470 768 610 C762 680 785 722 815 757 C828 652 868 572 935 520 C880 618 858 700 845 800 C825 885 760 950 682 976 C800 972 855 905 903 832 C985 758 1045 650 1030 378Z" fill="#fff" stroke="#0ca64e" stroke-width="34" paint-order="stroke" stroke-linejoin="round"/></svg>
<div class="b" style="left:571.50px;top:341.00px;width:123.50px;height:38.80px;background:#fff;border-radius:5.500px;"></div>
<svg class="b" style="left:584.50px;top:355.00px;border-radius:1px;" width="15.00" height="10.50" viewBox="0 0 15 10.500"><rect width="15" height="10.500" fill="#f2f2f2"/><rect y="0.00" width="15" height="0.810" fill="#d9485a"/><rect y="1.61" width="15" height="0.810" fill="#d9485a"/><rect y="3.23" width="15" height="0.810" fill="#d9485a"/><rect y="4.84" width="15" height="0.810" fill="#d9485a"/><rect y="6.46" width="15" height="0.810" fill="#d9485a"/><rect y="8.07" width="15" height="0.810" fill="#d9485a"/><rect y="9.69" width="15" height="0.810" fill="#d9485a"/><rect width="6.800" height="5.650" fill="#3f5fa8"/></svg>
<span class="t" id="t42" style="left:604.43px;top:352.00px;font-size:17.00px;color:#111;">English</span>
<svg class="b" style="left:682.50px;top:357.00px;" width="10.00" height="7.30" viewBox="0 0 11 8"><path d="M1.300 1.800 L5.500 6 L9.700 1.800" fill="none" stroke="#222" stroke-width="1.400" stroke-linecap="round" stroke-linejoin="round"/></svg>
<span class="t" id="t43" style="left:295.27px;top:487.00px;font-size:22.80px;color:#fff;font-weight:700;transform:scaleX(1.0065);">Setting up your account</span>
<div class="b" style="left:307.00px;top:553.20px;width:37.00px;height:37.00px;background:#fbbb27;border-radius:50%;"></div><svg class="b" style="left:314.00px;top:560.20px;" width="23.00" height="23.00" viewBox="0 0 20 20"><g fill="none" stroke="#1c1917" stroke-width="1.200" stroke-linecap="round" stroke-linejoin="round"><circle cx="10" cy="6.300" r="3.300"/><ellipse cx="10" cy="14.600" rx="6.400" ry="3.300"/></g></svg><span class="t" id="t44" style="left:360.08px;top:554.00px;font-size:15.70px;color:#fff;font-weight:700;transform:scaleX(1.0604);">Profile Identification</span><span class="t" id="t45" style="left:361.01px;top:577.00px;font-size:14.40px;color:#e9f7ee;transform:scaleX(1.0573);-webkit-text-stroke:0.200px #e9f7ee;">Tell us about yourself</span>
<div class="b" style="left:307.00px;top:638.80px;width:37.00px;height:37.00px;background:#fbbb27;border-radius:50%;"></div><svg class="b" style="left:314.00px;top:645.80px;" width="23.00" height="23.00" viewBox="0 0 20 20"><g fill="none" stroke="#1c1917" stroke-width="1.200" stroke-linecap="round" stroke-linejoin="round"><circle cx="10" cy="10" r="7.800"/><path d="M10.800 13.200 C8.500 11 7.800 9.500 7.800 8.300 A3 3 0 0 1 13.800 8.300 C13.800 9.500 13.100 11 10.800 13.200Z"/><circle cx="10.800" cy="8.300" r="0.800"/><path d="M3.200 6.300 L13.500 16.800 M2.600 12.300 C4.500 11 6.500 11.300 8 12.800"/></g></svg><span class="t" id="t46" style="left:360.08px;top:640.00px;font-size:15.70px;color:#fff;font-weight:700;transform:scaleX(1.0479);">Location</span><span class="t" id="t47" style="left:361.11px;top:662.00px;font-size:14.40px;color:#e9f7ee;transform:scaleX(1.0472);-webkit-text-stroke:0.200px #e9f7ee;">Where is your farm located?</span>
<div class="b" style="left:295.00px;top:708.10px;width:399.50px;height:69.60px;background:#fbbb27;border-radius:35px;"></div><svg class="b" style="left:314.00px;top:731.30px;" width="23.00" height="23.00" viewBox="0 0 20 20"><g fill="none" stroke="#1c1917" stroke-width="1.200" stroke-linecap="round" stroke-linejoin="round"><rect x="2.300" y="2.300" width="15.400" height="15.400" rx="4"/><path d="M9 6.500 H14 M9 10 H14 M9 13.500 H14 M6 6.500 H6.300 M6 10 H6.300 M6 13.500 H6.300"/></g></svg><span class="t" id="t48" style="left:359.76px;top:725.00px;font-size:15.70px;color:#111;font-weight:700;transform:scaleX(1.0455);">Farm Details</span><span class="t" id="t49" style="left:360.07px;top:748.00px;font-size:14.40px;color:#1a1a1a;transform:scaleX(1.0689);-webkit-text-stroke:0.200px #1a1a1a;">Configure the farm</span>
<div class="b" style="left:307.00px;top:810.00px;width:37.00px;height:37.00px;background:#fbbb27;border-radius:50%;"></div><svg class="b" style="left:314.00px;top:817.00px;" width="23.00" height="23.00" viewBox="0 0 20 20"><g fill="none" stroke="#1c1917" stroke-width="1.200" stroke-linecap="round" stroke-linejoin="round"><circle cx="6" cy="13.800" r="3.600"/><circle cx="15.300" cy="15.300" r="2.200"/><path d="M3.500 2.500 H9.500 M4.500 2.500 V10.300 M8.500 2.500 V8 H13 L16.500 10 V13 M9.600 13.800 H13 M13.500 5 L16.800 8 M15.500 4.500 V7"/></g></svg><span class="t" id="t50" style="left:360.34px;top:811.00px;font-size:15.70px;color:#fff;font-weight:700;transform:scaleX(1.0427);">Crop Parcels Typology</span><span class="t" id="t51" style="left:360.30px;top:834.00px;font-size:14.40px;color:#e9f7ee;transform:scaleX(1.0529);-webkit-text-stroke:0.200px #e9f7ee;">Choose crop</span>
<div class="b" style="left:307.00px;top:895.60px;width:37.00px;height:37.00px;background:#fbbb27;border-radius:50%;"></div><svg class="b" style="left:314.00px;top:902.60px;" width="23.00" height="23.00" viewBox="0 0 20 20"><g fill="none" stroke="#1c1917" stroke-width="1.200" stroke-linecap="round" stroke-linejoin="round"><rect x="2.300" y="2.800" width="15.400" height="14.400" rx="4"/><circle cx="7" cy="7.500" r="1.300"/><path d="M8.500 7.500 H14.500"/><circle cx="13" cy="12.500" r="1.300"/><path d="M5.500 12.500 H11.500"/></g></svg><span class="t" id="t52" style="left:360.33px;top:896.00px;font-size:15.70px;color:#fff;font-weight:700;transform:scaleX(1.0559);">Configuration</span><span class="t" id="t53" style="left:361.09px;top:919.00px;font-size:14.40px;color:#e9f7ee;transform:scaleX(1.0570);-webkit-text-stroke:0.200px #e9f7ee;">Additional preferences</span>
<span class="t" id="t54" style="left:836.49px;top:324.00px;font-size:21.00px;color:#151a23;font-weight:700;transform:scaleX(0.9908);">Farm Details</span>
<span class="t" id="t55" style="left:837.15px;top:361.00px;font-size:14.80px;color:#3f4754;transform:scaleX(1.0370);">Configure the specific details for each farm to enable precise monitoring and recommendations.</span>
<div class="b" style="left:837.50px;top:403.00px;width:651.50px;height:615.00px;background:#f9fafb;border:1.300px solid #eceef2;border-radius:11px;"></div>
<div class="b" style="left:821.80px;top:1017.00px;width:684.00px;height:1.30px;background:#e8eaee;"></div>
<span class="t" id="t56" style="left:850.11px;top:435.00px;font-size:14.90px;color:#14181f;-webkit-text-stroke:0.450px #14181f;">Farm Name</span>
<span class="t" id="t57" style="left:933.30px;top:436.00px;font-size:16.50px;color:#dc2626;font-weight:700;">*</span>
<div class="b" style="left:850.60px;top:456.80px;width:625.40px;height:38.40px;background:#fff;border:1.300px solid #e4e6eb;border-radius:8px;"></div>
<span class="t" id="t58" style="left:863.37px;top:469.00px;font-size:14.90px;color:#14181f;transform:scaleX(0.9603);-webkit-text-stroke:0.150px #14181f;">Ferme 1</span>
<div class="b" style="left:850.60px;top:511.60px;width:625.40px;height:229.20px;background:#fff;border:1.300px solid #eceef2;border-radius:8px;"></div>
<svg class="b" style="left:871.50px;top:529.50px;" width="21.00" height="21.00" viewBox="0 0 21 21"><g fill="none" stroke="#111" stroke-width="1.500" stroke-linecap="round" stroke-linejoin="round"><path d="M10.500 13.500 V2 L15 4.300 L10.500 6.700"/><path d="M7 11.300 L2 14.300 L10.500 19 L19 14.300 L14 11.300"/><path d="M6.500 16.800 L14.500 12 M6.300 11.800 L14.700 16.600"/></g></svg>
<span class="t" id="t59" style="left:903.72px;top:532.00px;font-size:14.90px;color:#14181f;transform:scaleX(1.0236);-webkit-text-stroke:0.150px #14181f;">Location and Area</span>
<span class="t" id="t60" style="left:864.35px;top:577.00px;font-size:14.90px;color:#14181f;transform:scaleX(1.0362);-webkit-text-stroke:0.450px #14181f;">Total Area (hectares)</span>
<span class="t" id="t61" style="left:1010.80px;top:577.00px;font-size:16.50px;color:#dc2626;font-weight:700;">*</span>
<div class="b" style="left:864.20px;top:598.40px;width:598.80px;height:38.40px;background:#fff;border:1.300px solid #e4e6eb;border-radius:8px;"></div>
<span class="t" id="t62" style="left:876.94px;top:611.00px;font-size:14.90px;color:#14181f;transform:scaleX(1.0272);-webkit-text-stroke:0.150px #14181f;">5</span>
<span class="t" id="t63" style="left:863.56px;top:657.00px;font-size:14.90px;color:#14181f;transform:scaleX(1.0500);-webkit-text-stroke:0.450px #14181f;">Description</span>
<div class="b" style="left:864.20px;top:678.40px;width:598.80px;height:37.60px;background:#fff;border:1.300px solid #e4e6eb;border-radius:8px;"></div>
<span class="t" id="t64" style="left:876.51px;top:690.00px;font-size:14.90px;color:#14181f;transform:scaleX(1.0218);-webkit-text-stroke:0.150px #14181f;">Parcelle pilote</span>
<div class="b" style="left:850.60px;top:762.80px;width:625.40px;height:221.80px;background:#fff;border:1.300px solid #eceef2;border-radius:8px;"></div>
<svg class="b" style="left:863.50px;top:771.50px;" width="20.00" height="20.00" viewBox="0 0 20 20"><g fill="none" stroke="#111" stroke-width="1.550" stroke-linecap="round" stroke-linejoin="round"><path d="M6 5.500 C4.300 7.800 3 9 3 10.800 A3 3 0 0 0 9 10.800 C9 9 7.700 7.800 6 5.500Z"/><path d="M10.300 5.200 C10.900 4.400 11.300 3.500 11.500 2.300 C12.300 4.300 13.500 5.500 14.800 6.800 C16.200 8.200 17 9.800 17 11.500 A5.200 5.200 0 0 1 8.300 15.400"/></g></svg>
<span class="t" id="t65" style="left:895.75px;top:775.00px;font-size:14.90px;color:#14181f;transform:scaleX(1.0371);-webkit-text-stroke:0.150px #14181f;">Irrigation system</span>
<span class="t" id="t66" style="left:863.25px;top:811.00px;font-size:14.90px;color:#14181f;transform:scaleX(1.0470);-webkit-text-stroke:0.250px #14181f;">Irrigation type</span>
<span class="t" id="t67" style="left:962.30px;top:812.00px;font-size:16.50px;color:#dc2626;font-weight:700;">*</span>
<div class="b" style="left:864.20px;top:835.20px;width:598.80px;height:40.60px;background:#f7f8fa;border:1.300px solid #d6d9df;border-radius:7px;box-shadow:0 1px 1.500px rgba(0,0,0,0.060);"></div>
<span class="t" id="t68" style="left:878.87px;top:848.00px;font-size:14.90px;color:#14181f;transform:scaleX(1.0324);-webkit-text-stroke:0.150px #14181f;">Drip</span>
<svg class="b" style="left:1448.50px;top:851.50px;" width="11.00" height="8.00" viewBox="0 0 11 8"><path d="M1.300 1.800 L5.500 6 L9.700 1.800" fill="none" stroke="#222" stroke-width="1.500" stroke-linecap="round" stroke-linejoin="round"/></svg>
<span class="t" id="t69" style="left:863.56px;top:900.00px;font-size:14.90px;color:#14181f;transform:scaleX(1.0500);-webkit-text-stroke:0.450px #14181f;">Description</span>
<div class="b" style="left:862.30px;top:919.90px;width:602.50px;height:42.10px;background:#fff;border:2.400px solid #45bd78;border-radius:8px;"></div>
<span class="t" id="t70" style="left:876.65px;top:934.00px;font-size:14.90px;color:#14181f;transform:scaleX(1.0735);-webkit-text-stroke:0.150px #14181f;">irrigati</span>
<div class="b" style="left:919.20px;top:932.30px;width:1.30px;height:16.90px;background:#111;"></div>
<div class="b" style="left:837.60px;top:1034.40px;width:318.70px;height:45.60px;background:#f3f4f6;border-radius:9px;border:1px solid #eceef1;"></div>
<div class="b" style="left:1169.40px;top:1034.40px;width:320.20px;height:45.60px;background:#16a84f;border-radius:9px;"></div>
<!-- toolbar -->
<div class="b" style="left:10.00px;top:1043.00px;width:1899.00px;height:81.00px;background:#000;"></div>
<svg class="b" style="left:60.00px;top:1050.00px;" width="44.00" height="44.00" viewBox="0 0 44 44"><g fill="none" stroke="#fff" stroke-width="1.700" stroke-linecap="round" stroke-linejoin="round"><rect x="15.300" y="6" width="13" height="22" rx="6.500"/><path d="M11.500 21 V21.500 A10.300 10.300 0 0 0 32.100 21.500 V21"/><path d="M21.800 32 V38.200 M15.500 38.400 H28.300"/></g><path d="M6.300 38.300 L37.300 7" stroke="#000" stroke-width="6"/><path d="M6.300 38.300 L37.300 7" stroke="#ff1458" stroke-width="3.300" stroke-linecap="round"/></svg>
<svg class="b" style="left:120.50px;top:1069.40px;" width="12.00" height="8.00" viewBox="0 0 12 8"><path d="M1.700 5.900 L6 1.900 L10.300 5.900" fill="none" stroke="#b0b0b0" stroke-width="1.600" stroke-linecap="round" stroke-linejoin="round"/></svg>
<span class="t" id="t71" style="left:60.82px;top:1098.00px;font-size:17.30px;color:#cfcfcf;-webkit-text-stroke:0.250px #cfcfcf;">Audio</span>
<svg class="b" style="left:190.00px;top:1050.00px;" width="44.00" height="44.00" viewBox="0 0 44 44"><g fill="none" stroke="#fff" stroke-width="1.700" stroke-linecap="round" stroke-linejoin="round"><rect x="5.500" y="13.500" width="22" height="19.500" rx="4"/><path d="M27.500 20.500 L38.300 14.500 V32 L27.500 26"/></g><path d="M6.300 38.300 L37.300 7" stroke="#000" stroke-width="6"/><path d="M6.300 38.300 L37.300 7" stroke="#ff1458" stroke-width="3.300" stroke-linecap="round"/></svg>
<svg class="b" style="left:257.70px;top:1069.40px;" width="12.00" height="8.00" viewBox="0 0 12 8"><path d="M1.700 5.900 L6 1.900 L10.300 5.900" fill="none" stroke="#b0b0b0" stroke-width="1.600" stroke-linecap="round" stroke-linejoin="round"/></svg>
<span class="t" id="t72" style="left:191.43px;top:1098.00px;font-size:17.30px;color:#cfcfcf;transform:scaleX(0.9638);-webkit-text-stroke:0.250px #cfcfcf;">Video</span>
<svg class="b" style="left:593.00px;top:1058.00px;" width="30.00" height="30.00" viewBox="0 0 30 30"><g fill="none" stroke="#fff" stroke-width="1.700" stroke-linecap="round" stroke-linejoin="round"><circle cx="8.800" cy="7.300" r="3.900"/><path d="M14 17.300 C13 15.600 11.200 14.800 8.800 14.800 C4.800 14.800 2.800 17.200 2.800 20.800 V23.200 Q2.800 24.800 4.400 24.800 H9.500"/><circle cx="19.800" cy="12" r="3.900"/><path d="M12.800 25.300 C12.800 21.600 15.200 19.300 19.800 19.300 C24.400 19.300 26.800 21.600 26.800 25.300 Q26.800 26.800 25.300 26.800 H14.300 Q12.800 26.800 12.800 25.300Z"/></g></svg>
<span class="t" id="t73" style="left:631.06px;top:1064.00px;font-size:16.80px;color:#cfcfcf;transform:scaleX(0.9298);-webkit-text-stroke:0.200px #cfcfcf;">67</span>
<svg class="b" style="left:675.70px;top:1069.60px;" width="12.00" height="8.00" viewBox="0 0 12 8"><path d="M1.700 5.900 L6 1.900 L10.300 5.900" fill="none" stroke="#b0b0b0" stroke-width="1.600" stroke-linecap="round" stroke-linejoin="round"/></svg>
<span class="t" id="t74" style="left:562.75px;top:1098.00px;font-size:17.30px;color:#cfcfcf;transform:scaleX(0.9878);-webkit-text-stroke:0.250px #cfcfcf;">Participants</span>
<svg class="b" style="left:735.00px;top:1050.00px;" width="46.88" height="45.00" viewBox="0 0 300 288"><g fill="none" stroke="#fff" stroke-width="10.500" stroke-linecap="round" stroke-linejoin="round"><path d="M122 92 C122 62 140 52 170 52 L222 52 C252 52 263 66 263 96 L263 122 C263 142 256 154 243 158"/><path d="M112 96 L176 96 C204 96 214 110 214 138 L214 168 C214 196 204 208 176 208 L160 208 C148 222 136 232 120 238 C126 228 128 218 128 208 L112 208 C84 208 74 196 74 168 L74 138 C74 110 84 96 112 96Z"/></g><g fill="#fff"><circle cx="110" cy="155" r="8.500"/><circle cx="147" cy="155" r="8.500"/><circle cx="184" cy="155" r="8.500"/></g></svg>
<svg class="b" style="left:801.70px;top:1069.60px;" width="12.00" height="8.00" viewBox="0 0 12 8"><path d="M1.700 5.900 L6 1.900 L10.300 5.900" fill="none" stroke="#b0b0b0" stroke-width="1.600" stroke-linecap="round" stroke-linejoin="round"/></svg>
<span class="t" id="t75" style="left:744.40px;top:1098.00px;font-size:17.30px;color:#cfcfcf;transform:scaleX(0.9638);-webkit-text-stroke:0.250px #cfcfcf;">Chat</span>
<svg class="b" style="left:862.00px;top:1056.00px;" width="38.00" height="34.00" viewBox="0 0 38 34"><g fill="none" stroke="#fff" stroke-width="1.700" stroke-linecap="round" stroke-linejoin="round"><path d="M13 31.200 L4.300 14 C0.800 6.500 8.500 0.200 15.500 5.500 C17 6.700 18 8.300 18.800 9.800 C20.800 7.800 23.300 6.300 26.500 6.300 C34 6.300 38.500 14.500 32.500 20.500 C28 24.500 20 28 13 31.200Z"/></g></svg>
<span class="t" id="t76" style="left:859.14px;top:1098.00px;font-size:17.30px;color:#cfcfcf;transform:scaleX(0.9372);-webkit-text-stroke:0.250px #cfcfcf;">React</span>
<div class="b" style="left:988.00px;top:1059.00px;width:33.70px;height:27.30px;background:#06ee8c;border-radius:4px;"></div>
<svg class="b" style="left:995.00px;top:1062.00px;" width="20.00" height="21.00" viewBox="0 0 20 21"><path d="M10 2.800 L17.600 11.400 L14.800 11.400 L11.900 8.300 V18.600 H8.100 V8.300 L5.200 11.400 L2.400 11.400Z" fill="#000" stroke="#000" stroke-width="0.800" stroke-linejoin="round"/></svg>
<span class="t" id="t77" style="left:984.05px;top:1098.00px;font-size:17.30px;color:#cfcfcf;transform:scaleX(0.9217);-webkit-text-stroke:0.250px #cfcfcf;">Share</span>
<svg class="b" style="left:1122.00px;top:1056.00px;" width="36.00" height="34.00" viewBox="0 0 36 34"><path d="M15.300 5.300 C16.500 11.500 20.500 16.500 29.300 18.300 C20.500 20.300 16.500 25 15.300 31.300 C14 25 10 20.300 2.800 18.300 C10 16.500 14 11.500 15.300 5.300Z" fill="none" stroke="#f5c52f" stroke-width="1.900" stroke-linejoin="round"/><path d="M28.300 0.800 C28.900 3.800 30.300 5.300 33.500 6 C30.300 6.700 28.900 8.200 28.300 11.200 C27.700 8.200 26.300 6.700 23.100 6 C26.300 5.300 27.700 3.800 28.300 0.800Z" fill="#f5c52f"/></svg>
<span class="t" id="t78" style="left:1085.61px;top:1098.00px;font-size:17.30px;color:#cfcfcf;-webkit-text-stroke:0.250px #cfcfcf;">AI Companion</span>
<svg class="b" style="left:1244.00px;top:1056.00px;" width="36.00" height="34.00" viewBox="0 0 36 34"><g fill="none" stroke="#fff" stroke-width="1.700" stroke-linecap="round" stroke-linejoin="round" stroke-width="2"><circle cx="26.300" cy="8.300" r="5"/><circle cx="8.800" cy="24.800" r="5"/><path d="M3.800 14.300 V9.300 Q3.800 3.600 9.500 3.600 H15"/><path d="M31.500 19.300 V24.300 Q31.500 30 25.800 30 H20.300"/></g></svg>
<span class="t" id="t79" style="left:1243.35px;top:1098.00px;font-size:17.30px;color:#cfcfcf;transform:scaleX(0.9568);-webkit-text-stroke:0.250px #cfcfcf;">Apps</span>
<div class="b" style="left:1357.80px;top:1057.30px;width:31.60px;height:31.60px;border:2.100px solid #fff;border-radius:50%;"></div>
<div class="b" style="left:1366.60px;top:1066.10px;width:14.00px;height:14.00px;background:#fff;border-radius:50%;"></div>
<span class="t" id="t80" style="left:1346.55px;top:1098.00px;font-size:17.30px;color:#cfcfcf;transform:scaleX(0.9788);-webkit-text-stroke:0.250px #cfcfcf;">Record</span>
<div class="b" style="left:1472.50px;top:1057.00px;width:32.40px;height:32.40px;border:2.100px solid #fff;border-radius:50%;"></div>
<div class="b" style="left:1480.20px;top:1071.70px;width:3.00px;height:3.00px;background:#fff;border-radius:50%;"></div>
<div class="b" style="left:1487.20px;top:1071.70px;width:3.00px;height:3.00px;background:#fff;border-radius:50%;"></div>
<div class="b" style="left:1494.20px;top:1071.70px;width:3.00px;height:3.00px;background:#fff;border-radius:50%;"></div>
<span class="t" id="t81" style="left:1468.18px;top:1098.00px;font-size:17.30px;color:#cfcfcf;transform:scaleX(1.0668);-webkit-text-stroke:0.250px #cfcfcf;">More</span>
<svg class="b" style="left:1823.00px;top:1054.00px;" width="38.00" height="37.00" viewBox="0 0 38 37"><path d="M17.500 3.300 H34.800 V30 L25.500 35.300 V8 " fill="none" stroke="#ff1458" stroke-width="2" stroke-linejoin="round"/><path d="M25.500 8 L34.800 3.300" stroke="#ff1458" stroke-width="2"/><g fill="#000" stroke="#fff" stroke-width="2.100" stroke-linejoin="round" stroke-linecap="round"><circle cx="14.800" cy="9.300" r="3.300"/><path d="M9.500 15.500 Q13 12.800 16.500 14.800 L18 20 L22.300 22.300 L21 24.800 L16 22.500 L17.800 27.800 L20 34.300 L16.800 35 L13.300 27.300 L10 34.800 L6.800 34 L10 24.500 L9.800 19.500 L6.500 23.300 L4.300 21.800Z"/></g></svg>
<span class="t" id="t82" style="left:1820.14px;top:1098.00px;font-size:17.30px;color:#cfcfcf;transform:scaleX(0.9331);-webkit-text-stroke:0.250px #cfcfcf;">Leave</span>
</body></html>
